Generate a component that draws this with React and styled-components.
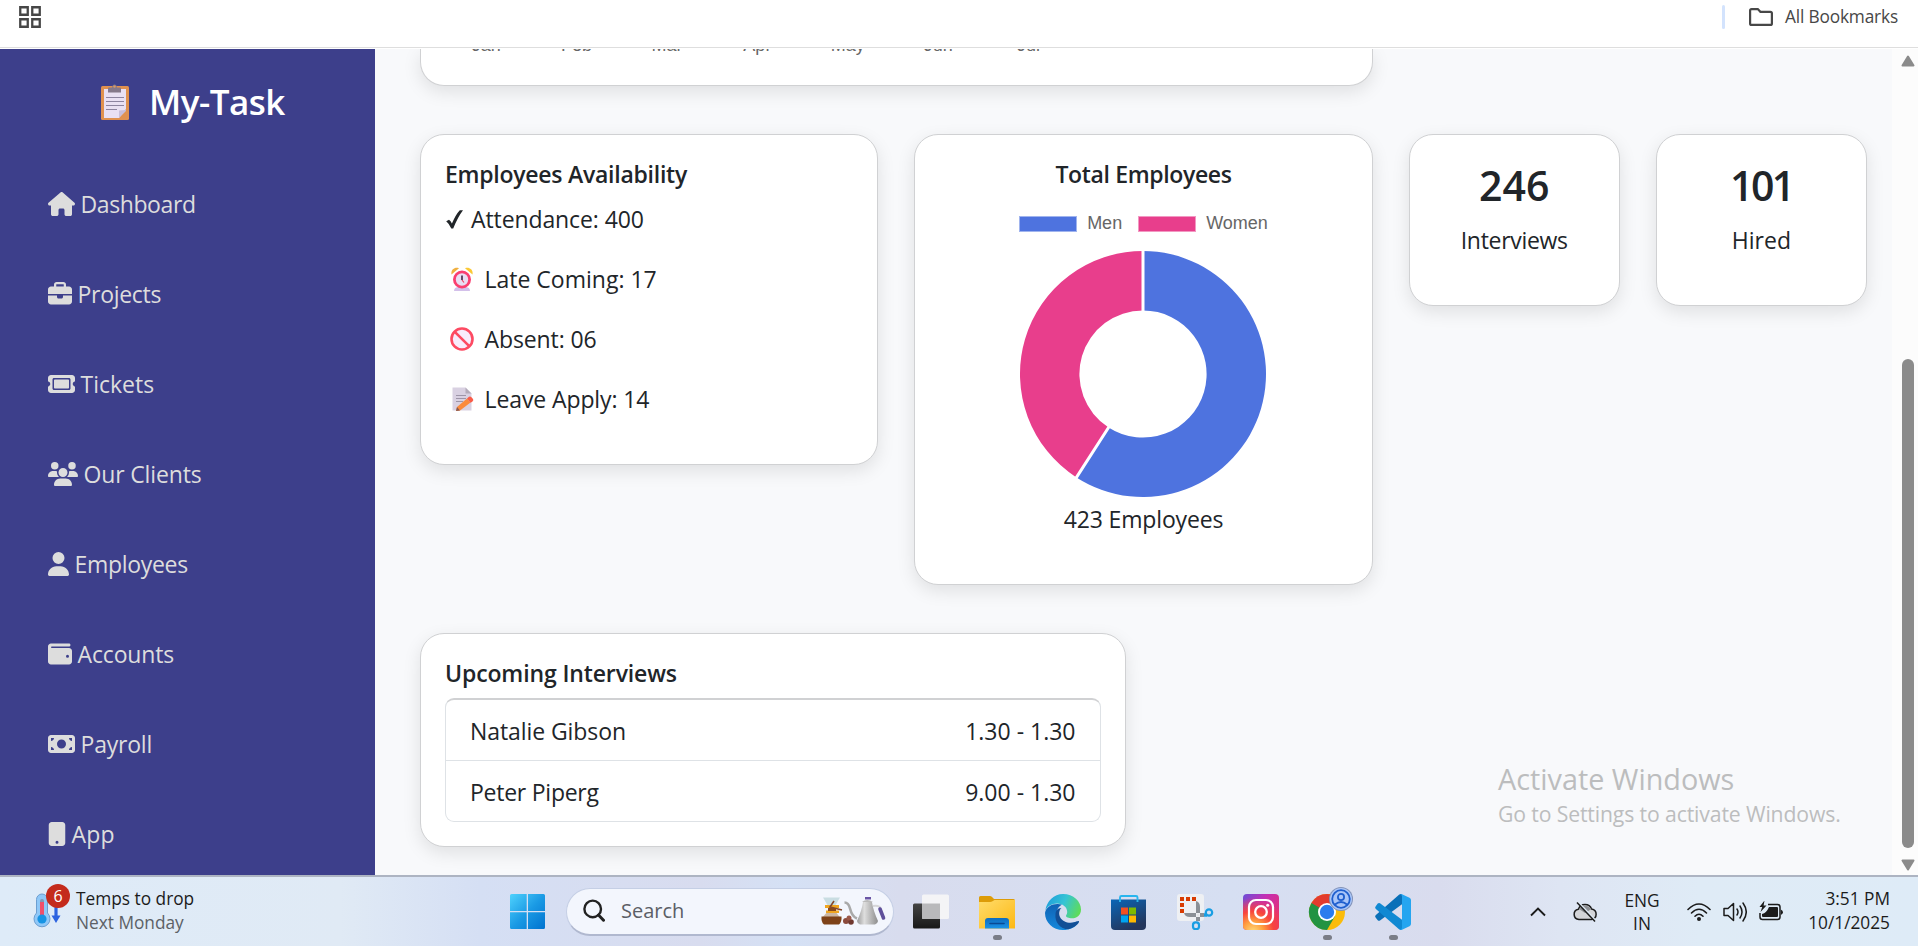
import React from "react";
import styled, { createGlobalStyle } from "styled-components";
import {
  FaHouse,
  FaBriefcase,
  FaTicket,
  FaUsers,
  FaUser,
  FaWallet,
  FaMoneyBill,
  FaMobileButton,
} from "react-icons/fa6";

const GlobalStyle = createGlobalStyle`
  *, *::before, *::after { box-sizing: border-box; }
  html, body { margin: 0; padding: 0; overflow: hidden; }
  body {
    font-family: "Open Sans", "Noto Sans", sans-serif;
    font-size: 23px;
    line-height: 36px;
    color: #212529;
    background: #fff;
  }
  svg { display: block; flex: none; }
`;

const Screen = styled.div`
  display: flex;
  flex-direction: column;
  width: 1918px;
  height: 946px;
  overflow: hidden;
`;

/* ---------- bookmarks bar ---------- */

const BookmarksBar = styled.header`
  display: flex;
  align-items: flex-start;
  justify-content: space-between;
  height: 49px;
  padding: 5px 20px 0 19px;
  background: linear-gradient(#fff 47px, #dedede 47px, #dedede 48px, #fff 48px);
  color: #474747;
`;

const AppsIcon = styled.svg`
  width: 22px;
  height: 22px;
  margin-top: 1px;
`;

const AllBookmarks = styled.div`
  display: flex;
  align-items: center;
  height: 24px;
  font-size: 17.3px;
  line-height: 24px;
  letter-spacing: -0.17px;
`;

const BarDivider = styled.span`
  width: 3px;
  height: 24px;
  margin-right: 24px;
  border-radius: 1.5px;
  background: #d3e3fd;
`;

const FolderIcon = styled.svg`
  width: 24px;
  height: 18px;
  margin-right: 12px;
`;

/* ---------- page ---------- */

const Page = styled.div`
  display: flex;
  height: 826px;
  background: #f8f9fb;
`;

const Sidebar = styled.nav`
  flex: none;
  width: 375px;
  padding: 33px 48px 0;
  overflow: hidden;
  background: #3d3f8b;
`;

const Brand = styled.div`
  display: flex;
  align-items: center;
  height: 42px;
  margin-left: 53px;
  color: #fff;
  font-size: 35px;
  font-weight: 600;
  letter-spacing: -0.5px;
  line-height: 40px;
  svg { margin: 0 20px 2px 0; }
`;

const BrandName = styled.span`
  padding-bottom: 2px;
`;

const Menu = styled.ul`
  margin: 35px 0 0;
  padding: 0;
  list-style: none;
`;

const MenuItem = styled.li`
  display: flex;
  align-items: center;
  gap: 5.5px;
  height: 90px;
  color: #dddddd;
  letter-spacing: ${(p) => p.$ls}px;
  white-space: nowrap;
  svg { width: ${(p) => p.$iconWidth}px; height: 24px; }
`;

const Content = styled.main`
  flex: 1;
  padding: 0 25px 0 45px;
  overflow: hidden;
`;

const Grid = styled.div`
  display: grid;
  grid-template-columns: repeat(12, 1fr);
  grid-template-rows: 37px 451px 214px;
  gap: 48px 36px;
  align-items: start;
`;

const Card = styled.section`
  grid-column: ${(p) => (p.$first ? "1 / " : "")}span ${(p) => p.$span};
  height: ${(p) => p.$height}px;
  padding: 24px;
  border: 1px solid #d0d1d3;
  border-radius: 24px;
  background: #fff;
  box-shadow: 0 6px 18px rgba(0, 0, 0, 0.1);
  text-align: ${(p) => (p.$center ? "center" : "left")};
`;

const ChartCard = styled(Card)`
  padding: 0 0 0 20px;
  border-top: 0;
  border-radius: 0 0 24px 24px;
`;

const Months = styled.div`
  display: flex;
  margin-top: -14px;
  color: #666;
  font-family: "Liberation Sans", Arial, sans-serif;
  font-size: 18px;
  line-height: 20px;
`;

const Month = styled.span`
  width: 90.4px;
  text-align: center;
`;

const CardTitle = styled.h5`
  margin: 0 0 12px;
  padding-top: 1px;
  font-size: 23px;
  font-weight: 600;
  line-height: 28.8px;
  letter-spacing: ${(p) => p.$ls || 0}px;
`;

const AvailabilityRow = styled.p`
  display: flex;
  align-items: center;
  height: 36px;
  margin: 0 0 24px;
  letter-spacing: ${(p) => p.$ls || 0}px;
  svg { margin: 1px ${(p) => (p.$wide ? 11 : 8)}px 0 ${(p) => (p.$wide ? 4.5 : 1)}px; }
`;

const Legend = styled.div`
  display: flex;
  align-items: center;
  justify-content: center;
  gap: 16px;
  height: 24px;
  margin-top: 23px;
  color: #666;
  font-family: "Liberation Sans", Arial, sans-serif;
  font-size: 18px;
  line-height: 20px;
`;

const LegendItem = styled.span`
  display: flex;
  align-items: center;
  gap: 10px;
`;

const LegendLabel = styled.span`
  padding-bottom: 1px;
`;

const Swatch = styled.i`
  width: 58px;
  height: 16px;
  border: 1px solid ${(p) => p.$edge};
  background: ${(p) => p.$color};
`;

const Donut = styled.svg`
  width: 246px;
  height: 246px;
  margin: 15px auto 4px;
`;

const Caption = styled.p`
  margin: 0;
  letter-spacing: ${(p) => p.$ls || 0}px;
`;

const StatNumber = styled.h3`
  margin: 0 0 12px;
  padding-top: 1px;
  font-size: 41px;
  font-weight: 600;
  line-height: 50px;
  letter-spacing: ${(p) => p.$ls || 0}px;
`;

const InterviewList = styled.ul`
  margin: -1.5px 0 0;
  padding: 0;
  list-style: none;
  border: 1px solid #dee2e6;
  border-top: 2px solid #d0d1d3;
  border-radius: 9px;
`;

const InterviewRow = styled.li`
  display: flex;
  justify-content: space-between;
  height: 60px;
  padding: 13px 24px 0;
  letter-spacing: ${(p) => p.$ls || 0}px;
  & + & { height: 61px; border-top: 1px solid #dee2e6; }
`;

const Time = styled.span`
  letter-spacing: 0;
`;

const ScrollTrack = styled.div`
  display: flex;
  flex: none;
  flex-direction: column;
  align-items: center;
  width: 26px;
  padding: 6px 0 4px 6px;
  background: #fcfcfc;
`;

const ScrollThumb = styled.div`
  width: 12px;
  height: 489px;
  margin: auto 0 11px;
  border-radius: 6px;
  background: #8b8b8b;
`;

const Watermark = styled.aside`
  position: absolute;
  left: 1498px;
  top: 759px;
  color: #bcbdbe;
  white-space: nowrap;
`;

const WatermarkTitle = styled.div`
  font-size: 28.8px;
  line-height: 40px;
`;

const WatermarkText = styled.div`
  font-size: 21.2px;
  line-height: 30px;
  letter-spacing: -0.13px;
`;

/* ---------- taskbar ---------- */

const Taskbar = styled.footer`
  display: flex;
  align-items: center;
  height: 71px;
  padding-right: 28px;
  border-top: 2px solid #adb4c2;
  background: linear-gradient(90deg, #deebf8 0, #e0eaf5 340px, #d5dff4 480px, #d8dcef 700px, #d5e1f5 790px,
    #d8dcee 900px, #d6dff2 1230px, #d9dcee 1440px, #dee5f3 1560px, #dfebf6 1700px, #deebf7 100%);
  color: #1b1b1b;
  font-size: 17.3px;
`;

const Widget = styled.div`
  display: flex;
  align-items: center;
  width: 510px;
  padding: 0 0 0 31px;
`;

const WidgetIcon = styled.div`
  position: relative;
  width: 45px;
  height: 48px;
  margin-bottom: 3px;
  padding: 7px 0 0 1px;
`;

const Badge = styled.span`
  position: absolute;
  left: 15px;
  top: -2px;
  width: 24px;
  height: 24px;
  border-radius: 50%;
  background: #c42b1c;
  color: #fff;
  font-size: 16px;
  line-height: 24px;
  text-align: center;
`;

const Lines = styled.div`
  width: ${(p) => (p.$width ? `${p.$width}px` : "auto")};
  padding-bottom: ${(p) => p.$lift || 0}px;
  line-height: ${(p) => p.$line || 24}px;
  text-align: ${(p) => p.$align || "left"};
  white-space: nowrap;
`;

const Muted = styled.div`
  color: #5c6166;
`;

const SearchBox = styled.div`
  display: flex;
  align-items: center;
  width: 328px;
  height: 48px;
  margin: 0 19px 0 20px;
  padding: 0 7px 0 16px;
  border: 1px solid #c5cfe5;
  border-bottom: 2px solid #b0b8cf;
  border-radius: 24px;
  background: #f3f6fd;
  color: #5b5e66;
  font-size: 20px;
  line-height: 28px;
  svg { margin-bottom: 1px; }
  svg:last-child { margin-left: auto; }
`;

const SearchLabel = styled.span`
  margin-left: 16px;
`;

const AppButtons = styled.div`
  display: flex;
  gap: 30px;
`;

const AppButton = styled.div`
  position: relative;
  width: 36px;
  height: 36px;
  &::after {
    content: "";
    display: ${(p) => (p.$running ? "block" : "none")};
    position: absolute;
    left: 14px;
    top: 41px;
    width: 9px;
    height: 5px;
    border-radius: 2.5px;
    background: #7a7d87;
  }
  svg { overflow: visible; }
`;

const Tray = styled.div`
  display: flex;
  align-items: center;
  margin-left: auto;
`;

const TrayGroup = styled.div`
  display: flex;
  align-items: center;
  gap: 12px;
  margin: 0 ${(p) => p.$after}px 0 27px;
`;

/* ---------- pictograms ---------- */

const ClipboardIcon = () => (
  <svg width="28" height="36" viewBox="0 0 28 36">
    <rect x="0" y="2" width="28" height="34" rx="1.5" fill="#e0914f" />
    <path d="M3 5h22v20l-7 9H3z" fill="#e9e0f3" />
    <path d="M25 26v1l-7 7v-7.5z" fill="#c9bfda" />
    <path d="M7 8.500V4.500q0-1 1-1h3q.5-3 2.500-3t2.500 3h3q1 0 1 1v4z" fill="#85788a" />
    <circle cx="13.500" cy="2.600" r="1.200" fill="#d99a63" />
    <path d="M5 13.500h18M5 17.500h18M5 21.500h18M5 25.500h11" stroke="#8d84a0" strokeWidth="1.200" />
  </svg>
);

const CheckIcon = () => (
  <svg width="17" height="19" viewBox="0 0 17 19">
    <path d="M.2 11.200 3 9.800q1.800 1.300 2.900 3.800Q9.800 4.500 13.800.300l3.200-.1Q11.500 7.500 7.200 18.500H5.300Q3.500 14 .2 11.200z" fill="#212529" />
  </svg>
);

const ClockIcon = () => (
  <svg width="24" height="24" viewBox="0 0 24 24">
    <path d="M4 24q0-4 5-4h6q5 0 5 4z" fill="#d3c0ea" />
    <path d="M1.500 7.500C.6 3 4.500-.5 9 1.200z" fill="#f0b040" />
    <path d="M22.500 7.500C23.400 3 19.500-.5 15 1.200z" fill="#fbc936" />
    <circle cx="12" cy="12.500" r="7.600" fill="#e8def3" stroke="#fa3f70" strokeWidth="2.800" />
    <path d="M12 8.500v4.500" stroke="#3b2747" strokeWidth="1.600" />
    <path d="m12 13 2 2.500" stroke="#f23f5c" strokeWidth="1.200" />
  </svg>
);

const BanIcon = () => (
  <svg width="24" height="24" viewBox="0 0 24 24">
    <circle cx="12" cy="12" r="10.500" fill="#f8ecfc" stroke="#fd4a62" strokeWidth="2.600" />
    <path d="m4.800 4.800 14.400 14.400" stroke="#fd4a62" strokeWidth="2.600" />
  </svg>
);

const MemoIcon = () => (
  <svg width="24" height="24" viewBox="0 0 24 24">
    <path d="M2.500.5h13l6 6v17h-19z" fill="#d9d1e2" />
    <path d="M15.500.5v6h6z" fill="#b3abba" />
    <path d="M6 8.500h10M6 11.500h10M6 14.500h7" stroke="#9d95a8" strokeWidth="1.100" />
    <path d="m7 20 10-8.500 3.500 4L10 23.500l-4 .5z" fill="#fb8a3c" />
    <path d="m17 11.500 2-1.700q1.200-.8 2.200.2l1.800 2q.8 1.200-.4 2.200l-2 1.600z" fill="#fa5c48" />
    <path d="m7 20 3 3.500-4 .5z" fill="#8a5a54" />
  </svg>
);

const WindowsIcon = () => (
  <svg width="36" height="36" viewBox="0 0 36 36">
    <defs>
      <linearGradient id="win" x1="0" y1="0" x2="1" y2="1">
        <stop offset="0" stopColor="#4fd2fd" />
        <stop offset=".5" stopColor="#1b9be5" />
        <stop offset="1" stopColor="#0072cf" />
      </linearGradient>
    </defs>
    <path
      d="M1.500 0H16.700v17H0V1.500Q0 0 1.500 0zM18 0H33.500Q35 0 35 1.500V17H18zM0 18.300H16.700V35H1.500Q0 35 0 33.500zM18 18.300h17v15.200q0 1.500-1.500 1.500H18z"
      fill="url(#win)"
    />
  </svg>
);

const MagnifierIcon = () => (
  <svg width="22" height="23" viewBox="0 0 22 23">
    <circle cx="9.700" cy="9.900" r="8.300" fill="none" stroke="#222" strokeWidth="2.400" />
    <path d="m15.500 16 5 5.200" stroke="#222" strokeWidth="3" strokeLinecap="round" />
  </svg>
);

const CoffeeIcon = () => (
  <svg width="66" height="30" viewBox="0 0 66 30">
    <defs>
      <linearGradient id="pot" x1="0" x2="1">
        <stop offset="0" stopColor="#9b9b9b" />
        <stop offset=".35" stopColor="#dedede" />
        <stop offset="1" stopColor="#8d8d8d" />
      </linearGradient>
    </defs>
    <path d="M3 1.500h17l-5 8.500h-7z" fill="#c9dde2" />
    <path d="M8 15h7l5.500 7q1 3-1 6H3q-2-3-1-6z" fill="#cdb7a2" />
    <path d="M1.500 20.500h20q.5 5-2.500 8H4q-3-3-2.500-8z" fill="#7e4218" />
    <path d="M5 9h14v3H5zM6 14.500h13v2.500H6z" fill="#f0a51f" />
    <path d="M8 12h8v3H8z" fill="#8a4a1c" />
    <path d="m14 5-4 6 12 3" fill="none" stroke="#84482b" strokeWidth="1.600" />
    <circle cx="26" cy="25" r="3" fill="#8b4a3c" />
    <circle cx="31" cy="26" r="2.800" fill="#70382f" />
    <circle cx="29" cy="22" r="2.500" fill="#9a5748" />
    <path d="M24.500 6.500q4 0 5.500 6 2 8 7 10" fill="none" stroke="#a9a9a9" strokeWidth="2.600" />
    <path d="M43 6h9q1 8 6 19-.5 3-3 3.500H40q-2.500-.5-3-3.500 5-11 6-19z" fill="url(#pot)" />
    <path d="M42 6q5-4 11 0z" fill="#b9b9b9" />
    <path d="M45 1h6v2.500h-6z" fill="#6a55a5" />
    <path d="M53 10q6-1 7.500 2l1 3" fill="none" stroke="#d5d5d8" strokeWidth="1.800" />
    <path d="m60 13 3.500 9" stroke="#5f509b" strokeWidth="3.600" strokeLinecap="round" />
  </svg>
);

const TaskViewIcon = () => (
  <svg width="36" height="36" viewBox="0 0 36 36">
    <defs>
      <linearGradient id="tvDark" x1="0" y1="0" x2="0" y2="1">
        <stop offset="0" stopColor="#444" />
        <stop offset="1" stopColor="#181818" />
      </linearGradient>
    </defs>
    <rect x="0" y="9.500" width="27" height="25" rx="1.500" fill="url(#tvDark)" />
    <rect x="9" y=".5" width="27" height="24.500" rx="1.500" fill="#f4f4f6" />
    <path d="M9 9.500h18V25H10.500Q9 25 9 23.500z" fill="#b9b9bb" />
  </svg>
);

const ExplorerIcon = () => (
  <svg width="36" height="36" viewBox="0 0 36 36">
    <defs>
      <linearGradient id="folder" x1="0" y1="0" x2="1" y2="1">
        <stop offset="0" stopColor="#ffdc6b" />
        <stop offset="1" stopColor="#fdb813" />
      </linearGradient>
      <linearGradient id="folderClip" x1="0" y1="0" x2="0" y2="1">
        <stop offset="0" stopColor="#0f6cbd" />
        <stop offset="1" stopColor="#1b93e8" />
      </linearGradient>
    </defs>
    <path d="M0 3.500Q0 2 1.500 2H11q1 0 1.800.8L15 5h19.500Q36 5 36 6.500V12H0z" fill="#dd9c08" />
    <path d="M0 8h11q1.500 0 2.500-.8L15.500 6H36v28.500H0z" fill="url(#folder)" />
    <path d="M6 34.500V27q0-3 3-3h18q3 0 3 3v7.500z" fill="url(#folderClip)" />
    <path d="M11 29.500h14" stroke="#0a4a94" strokeWidth="1.600" strokeLinecap="round" />
  </svg>
);

const EdgeIcon = () => (
  <svg width="36" height="36" viewBox="0 0 36 36">
    <defs>
      <linearGradient id="edgeTop" x1="0" y1=".3" x2="1" y2=".6">
        <stop offset="0" stopColor="#1f9fdc" />
        <stop offset=".5" stopColor="#35c4d4" />
        <stop offset="1" stopColor="#5fdc58" />
      </linearGradient>
      <linearGradient id="edgeBody" x1="0" y1="0" x2="0" y2="1">
        <stop offset="0" stopColor="#0f62b4" />
        <stop offset="1" stopColor="#1589dc" />
      </linearGradient>
    </defs>
    <path d="M0 19C1 12 9 8.500 17 10.500c-5 3-6.500 8-4 13C16 30 24 31 32 27.500L33.500 29C30 33.500 24.500 36 18 36 8 36 0 28.500 0 19z" fill="url(#edgeBody)" />
    <path d="M10.500 20C9.500 28 15 35 23.500 35.300 28 34 32 31.500 33.800 28.600c.7-1.200-.2-1.800-1.200-1.300C26 30 18 29 15 23c-1.500-3-1-7 1.500-9-4 0-5.800 3-6 6z" fill="#124f96" />
    <path d="M.3 16.500C1.800 7 9 0 18 0c10.500 0 18 7.500 18 15.500 0 5.500-4 8.800-9 8.800-3.500 0-6-1.300-6-2.300s1.200-1.500 1.200-4C22.200 13 17.500 9.500 12 9.500 6.500 9.500 2.500 12.500.3 16.500z" fill="url(#edgeTop)" />
  </svg>
);

const StoreIcon = () => (
  <svg width="36" height="36" viewBox="0 0 36 36">
    <defs>
      <linearGradient id="store" x1="0" y1="0" x2=".5" y2="1">
        <stop offset="0" stopColor="#0a66b7" />
        <stop offset="1" stopColor="#24365c" />
      </linearGradient>
    </defs>
    <path d="M0 5.500h35V32q0 4-4 4H4q-4 0-4-4z" fill="url(#store)" />
    <path d="M9 8V3.500Q9 2 10.500 2H25q1.500 0 1.500 1.500V8" fill="none" stroke="#28b5ee" strokeWidth="1.900" />
    <path d="M10 13.500h7v7h-7z" fill="#f25022" />
    <path d="M18 13.500h7v7h-7z" fill="#7fba00" />
    <path d="M10 21.500h7v7h-7z" fill="#00a4ef" />
    <path d="M18 21.500h7v7h-7z" fill="#ffb900" />
  </svg>
);

const SnipIcon = () => (
  <svg width="36" height="36" viewBox="0 0 36 36">
    <rect x="0" y="0" width="27" height="27" rx="3" fill="#eef0f3" />
    <path d="M3 3h4v4H3zM9 3h4v4H9zM15 3h4v4h-4zM3 9h4v4H3zM3 15h4v4H3z" fill="#d83b01" />
    <path d="M19 7q4 1 4 6v14h-4zM7 19q1 4 6 4h14v-4z" fill="#8b9096" />
    <circle cx="21" cy="21" r="1.200" fill="#e4e6e9" />
    <circle cx="32" cy="18.500" r="3.200" fill="none" stroke="#199ee3" strokeWidth="2.200" />
    <path d="M27 21h3" stroke="#199ee3" strokeWidth="3.500" />
    <rect x="16" y="28.300" width="6" height="6.700" rx="2.600" fill="none" stroke="#199ee3" strokeWidth="2.200" />
  </svg>
);

const InstagramIcon = () => (
  <svg width="36" height="36" viewBox="0 0 36 36">
    <defs>
      <linearGradient id="igBase" x1="0" y1="0" x2="1" y2=".7">
        <stop offset="0" stopColor="#6a4fd8" />
        <stop offset=".45" stopColor="#c42fb4" />
        <stop offset="1" stopColor="#e8306e" />
      </linearGradient>
      <radialGradient id="igGlow" cx=".28" cy="1.050" r=".95">
        <stop offset="0" stopColor="#ffdc7a" />
        <stop offset=".3" stopColor="#ffa040" />
        <stop offset=".6" stopColor="#f8443c" />
        <stop offset="1" stopColor="#f8443c" stopOpacity="0" />
      </radialGradient>
    </defs>
    <rect width="36" height="36" rx="4" fill="url(#igBase)" />
    <rect width="36" height="36" rx="4" fill="url(#igGlow)" />
    <rect x="6" y="6" width="24" height="24" rx="7" fill="none" stroke="#fff" strokeWidth="2.200" />
    <circle cx="18" cy="18" r="5.800" fill="none" stroke="#fff" strokeWidth="2.300" />
    <circle cx="24.700" cy="11.200" r="1.500" fill="#fff" />
  </svg>
);

const ChromeIcon = () => (
  <svg width="36" height="36" viewBox="0 0 36 36">
    <circle cx="18" cy="18" r="18" fill="#fbbc0a" />
    <path d="M18 18 33.600 9A18 18 0 0 0 2.400 9l7.800 13.500z" fill="#e33b2e" />
    <path d="M18 18 2.400 9A18 18 0 0 0 18 36l7.800-13.500z" fill="#229342" />
    <circle cx="18" cy="18" r="9" fill="#fff" />
    <circle cx="18" cy="18" r="7.200" fill="#2b7cee" />
    <circle cx="32" cy="5" r="12" fill="#8393b8" />
    <circle cx="32" cy="5" r="11" fill="#a9c5f8" />
    <circle cx="32" cy="5" r="8.800" fill="none" stroke="#1f5fce" strokeWidth="1.800" />
    <circle cx="32" cy="3" r="3.100" fill="none" stroke="#1f5fce" strokeWidth="1.800" />
    <path d="M26 10.500q6-5 12 0" fill="none" stroke="#1f5fce" strokeWidth="1.800" />
  </svg>
);

const CodeIcon = () => (
  <svg width="36" height="36" viewBox="0 0 36 36">
    <path d="M.6 23.500q-1-1 0-2.200L24 .8q1.300-1.200 3-.5v10L5 26.500q-1.200.8-2.300-.3z" fill="#0a70b8" />
    <path d="M.6 12.500q-1 1 0 2.200L24 35.200q1.300 1.200 3 .5v-10L5 9.300q-1.200-.8-2.300.3z" fill="#1089d3" />
    <path d="M27 .2 34.500 3.800Q36 4.600 36 6v24q0 1.400-1.500 2.200L27 35.800q-1 .3-2-.6 2 .5 2-1.700v-31q0-2.200-2-1.700 1-.9 2-.6z" fill="#25a5f0" />
  </svg>
);

const ThermometerIcon = () => (
  <svg width="30" height="38" viewBox="0 0 30 38">
    <path d="M4.500 20V6.500a5.500 5.500 0 0 1 11 0V20a8 8 0 1 1-11 0z" fill="#8fc8f8" stroke="#6d9ed0" />
    <path d="M10 8v16" stroke="#8197b4" strokeWidth="4" strokeLinecap="round" />
    <path d="M10 9v14" stroke="#f0506c" strokeWidth="4" />
    <circle cx="10" cy="26" r="4.600" fill="#1694e4" />
    <path d="M24 14v11" stroke="#2c63e0" strokeWidth="3.200" />
    <path d="m19.500 22.500 4.500 7.500 4.500-7.500z" fill="#2c63e0" />
  </svg>
);

const CloudOffIcon = () => (
  <svg width="24" height="22" viewBox="0 0 24 22">
    <path d="M6 18.500a5.200 5.200 0 0 1-.6-10.300A7 7 0 0 1 18.600 8 5.300 5.300 0 0 1 18.500 18.500z" fill="#d4d5d8" stroke="#1d1d1d" strokeWidth="1.500" />
    <path d="M6 8q6-7 12.500 0L12 12z" fill="#8d8f93" />
    <path d="m5 .8 18 19" stroke="#dfeaf5" strokeWidth="1.800" />
    <path d="m4 1.500 18 19" stroke="#1d1d1d" strokeWidth="1.500" />
  </svg>
);

const WifiIcon = () => (
  <svg width="24" height="20" viewBox="0 0 24 20">
    <g fill="none" stroke="#1b1b1b" strokeWidth="1.600" strokeLinecap="round">
      <path d="M1 7.500q11-11 22 0" />
      <path d="M4.500 11q7.500-7.500 15 0" />
      <path d="M8 14.200q4-4 8 0" />
    </g>
    <circle cx="12" cy="17" r="2" fill="#1b1b1b" />
  </svg>
);

const VolumeIcon = () => (
  <svg width="24" height="22" viewBox="0 0 24 22">
    <g fill="none" stroke="#1b1b1b" strokeWidth="1.500" strokeLinecap="round" strokeLinejoin="round">
      <path d="M1 7.500h4L10.500 2.500v17L5 14.500H1z" />
      <path d="M14 8q2 3 0 6M17 5q4 6 0 12M20 2q6.500 9 0 18" />
    </g>
  </svg>
);

const BatteryIcon = () => (
  <svg width="24" height="21" viewBox="0 0 24 21">
    <path d="M9 3.500h9.500q2.500 0 2.500 2.500v10q0 2.500-2.500 2.500h-15Q1 18.500 1 16v-4" fill="none" stroke="#1b1b1b" strokeWidth="1.500" />
    <path d="M10 6h8q1 0 1 1v8q0 1-1 1H4q-1 0-1-1v-2q4.500-1 7-7z" fill="#1b1b1b" />
    <path d="M21.800 8.500q2.200 1 2.200 2.800t-2.200 2.700z" fill="#1b1b1b" />
    <path d="M5.500-.5 .5 6h2.700L1.500 11 7.500 4.500H4.600z" fill="#1b1b1b" />
  </svg>
);

/* ---------- data ---------- */

const menu = [
  { label: "Dashboard", Icon: FaHouse, width: 27, ls: -0.4 },
  { label: "Projects", Icon: FaBriefcase, width: 24, ls: -0.3 },
  { label: "Tickets", Icon: FaTicket, width: 27, ls: 0 },
  { label: "Our Clients", Icon: FaUsers, width: 30, ls: -0.15 },
  { label: "Employees", Icon: FaUser, width: 21, ls: -0.3 },
  { label: "Accounts", Icon: FaWallet, width: 24, ls: -0.15 },
  { label: "Payroll", Icon: FaMoneyBill, width: 27, ls: -0.2 },
  { label: "App", Icon: FaMobileButton, width: 18, ls: 0.2 },
];

const months = ["Jan", "Feb", "Mar", "Apr", "May", "Jun", "Jul"];

const interviews = [
  { name: "Natalie Gibson", time: "1.30 - 1.30", ls: -0.08 },
  { name: "Peter Piperg", time: "9.00 - 1.30", ls: -0.25 },
];

const apps = [
  ["taskview", TaskViewIcon, false],
  ["explorer", ExplorerIcon, true],
  ["edge", EdgeIcon, false],
  ["store", StoreIcon, false],
  ["snip", SnipIcon, false],
  ["instagram", InstagramIcon, false],
  ["chrome", ChromeIcon, true],
  ["code", CodeIcon, true],
];

const MEN = 250;
const TOTAL = 423;
const OUTER = 123;
const INNER = 63.6;

const point = (r, share) => {
  const a = share * 2 * Math.PI;
  return `${OUTER + r * Math.sin(a)} ${OUTER - r * Math.cos(a)}`;
};

const slice = (from, to) => {
  const large = to - from > 0.5 ? 1 : 0;
  return `M${point(OUTER, from)}A${OUTER} ${OUTER} 0 ${large} 1 ${point(OUTER, to)}L${point(INNER, to)}A${INNER} ${INNER} 0 ${large} 0 ${point(INNER, from)}z`;
};

const EmployeesDonut = () => {
  const split = MEN / TOTAL;
  return (
    <Donut viewBox="0 0 246 246">
      <path d={slice(0, split)} fill="#4e73df" />
      <path d={slice(split, 1)} fill="#e83e8c" />
      <path
        d={`M${point(INNER - 2, 0)}L${point(OUTER + 2, 0)}M${point(INNER - 2, split)}L${point(OUTER + 2, split)}`}
        stroke="#fff"
        strokeWidth="3"
      />
    </Donut>
  );
};

export default function App() {
  return (
    <Screen>
      <GlobalStyle />
      <BookmarksBar>
        <AppsIcon viewBox="0 0 22 22">
          <path
            d="M1.250 1.250h7.500v7.500h-7.500zM13.250 1.250h7.500v7.500h-7.500zM1.250 13.250h7.500v7.500h-7.500zM13.250 13.250h7.500v7.500h-7.500z"
            fill="none"
            stroke="#474747"
            strokeWidth="2.300"
          />
        </AppsIcon>
        <AllBookmarks>
          <BarDivider />
          <FolderIcon viewBox="0 0 24 18">
            <path
              d="M1.100 2.600q0-1.500 1.500-1.500h6.200l2.600 2.700h10q1.500 0 1.500 1.500v10.100q0 1.500-1.500 1.500H2.600q-1.500 0-1.500-1.500z"
              fill="none"
              stroke="#474747"
              strokeWidth="2.200"
            />
          </FolderIcon>
          All Bookmarks
        </AllBookmarks>
      </BookmarksBar>

      <Page>
        <Sidebar>
          <Brand>
            <ClipboardIcon />
            <BrandName>My-Task</BrandName>
          </Brand>
          <Menu>
            {menu.map(({ label, Icon, width, ls }) => (
              <MenuItem key={label} $ls={ls} $iconWidth={width}>
                <Icon />
                {label}
              </MenuItem>
            ))}
          </Menu>
        </Sidebar>

        <Content>
          <Grid>
            <ChartCard $first $span={8} $height={37}>
              <Months>
                {months.map((m) => (
                  <Month key={m}>{m}</Month>
                ))}
              </Months>
            </ChartCard>

            <Card $first $span={4} $height={331}>
              <CardTitle $ls={-0.25}>Employees Availability</CardTitle>
              <AvailabilityRow $ls={-0.1}>
                <CheckIcon />
                Attendance: 400
              </AvailabilityRow>
              <AvailabilityRow $wide>
                <ClockIcon />
                Late Coming: 17
              </AvailabilityRow>
              <AvailabilityRow $wide $ls={-0.1}>
                <BanIcon />
                Absent: 06
              </AvailabilityRow>
              <AvailabilityRow $wide $ls={-0.1}>
                <MemoIcon />
                Leave Apply: 14
              </AvailabilityRow>
            </Card>

            <Card $span={4} $height={451} $center>
              <CardTitle $ls={-0.35}>Total Employees</CardTitle>
              <Legend>
                <LegendItem>
                  <Swatch $color="#4e73df" $edge="#a0b4ee" />
                  <LegendLabel>Men</LegendLabel>
                </LegendItem>
                <LegendItem>
                  <Swatch $color="#e83e8c" $edge="#f298c2" />
                  <LegendLabel>Women</LegendLabel>
                </LegendItem>
              </Legend>
              <EmployeesDonut />
              <Caption $ls={-0.15}>423 Employees</Caption>
            </Card>

            <Card $span={2} $height={172} $center>
              <StatNumber>246</StatNumber>
              <Caption $ls={-0.3}>Interviews</Caption>
            </Card>

            <Card $span={2} $height={172} $center>
              <StatNumber $ls={-2.5}>101</StatNumber>
              <Caption>Hired</Caption>
            </Card>

            <Card $first $span={6} $height={214}>
              <CardTitle $ls={-0.13}>Upcoming Interviews</CardTitle>
              <InterviewList>
                {interviews.map(({ name, time, ls }) => (
                  <InterviewRow key={name} $ls={ls}>
                    <span>{name}</span>
                    <Time>{time}</Time>
                  </InterviewRow>
                ))}
              </InterviewList>
            </Card>
          </Grid>
        </Content>

        <ScrollTrack>
          <svg width="14" height="12" viewBox="0 0 14 12">
            <path d="M7 1.500 12.500 10.500h-11z" fill="#8b8b8b" stroke="#8b8b8b" strokeWidth="2" strokeLinejoin="round" />
          </svg>
          <ScrollThumb />
          <svg width="14" height="12" viewBox="0 0 14 12">
            <path d="M7 10.500 1.500 1.500h11z" fill="#8b8b8b" stroke="#8b8b8b" strokeWidth="2" strokeLinejoin="round" />
          </svg>
        </ScrollTrack>
      </Page>

      <Watermark>
        <WatermarkTitle>Activate Windows</WatermarkTitle>
        <WatermarkText>Go to Settings to activate Windows.</WatermarkText>
      </Watermark>

      <Taskbar>
        <Widget>
          <WidgetIcon>
            <ThermometerIcon />
            <Badge>6</Badge>
          </WidgetIcon>
          <Lines $lift={2}>
            <div>Temps to drop</div>
            <Muted>Next Monday</Muted>
          </Lines>
        </Widget>
        <WindowsIcon />
        <SearchBox>
          <MagnifierIcon />
          <SearchLabel>Search</SearchLabel>
          <CoffeeIcon />
        </SearchBox>
        <AppButtons>
          {apps.map(([id, Icon, running]) => (
            <AppButton key={id} $running={running}>
              <Icon />
            </AppButton>
          ))}
        </AppButtons>
        <Tray>
          <svg width="16" height="10" viewBox="0 0 16 10">
            <path d="m1 8.500 7-7 7 7" fill="none" stroke="#1b1b1b" strokeWidth="1.900" />
          </svg>
          <TrayGroup $after={27}>
            <CloudOffIcon />
          </TrayGroup>
          <Lines $width={36} $line={23} $align="center">
            <div>ENG</div>
            <div>IN</div>
          </Lines>
          <TrayGroup $after={17}>
            <WifiIcon />
            <VolumeIcon />
            <BatteryIcon />
          </TrayGroup>
          <Lines $width={90} $align="right" $lift={2}>
            <div>3:51 PM</div>
            <div>10/1/2025</div>
          </Lines>
        </Tray>
      </Taskbar>
    </Screen>
  );
}
